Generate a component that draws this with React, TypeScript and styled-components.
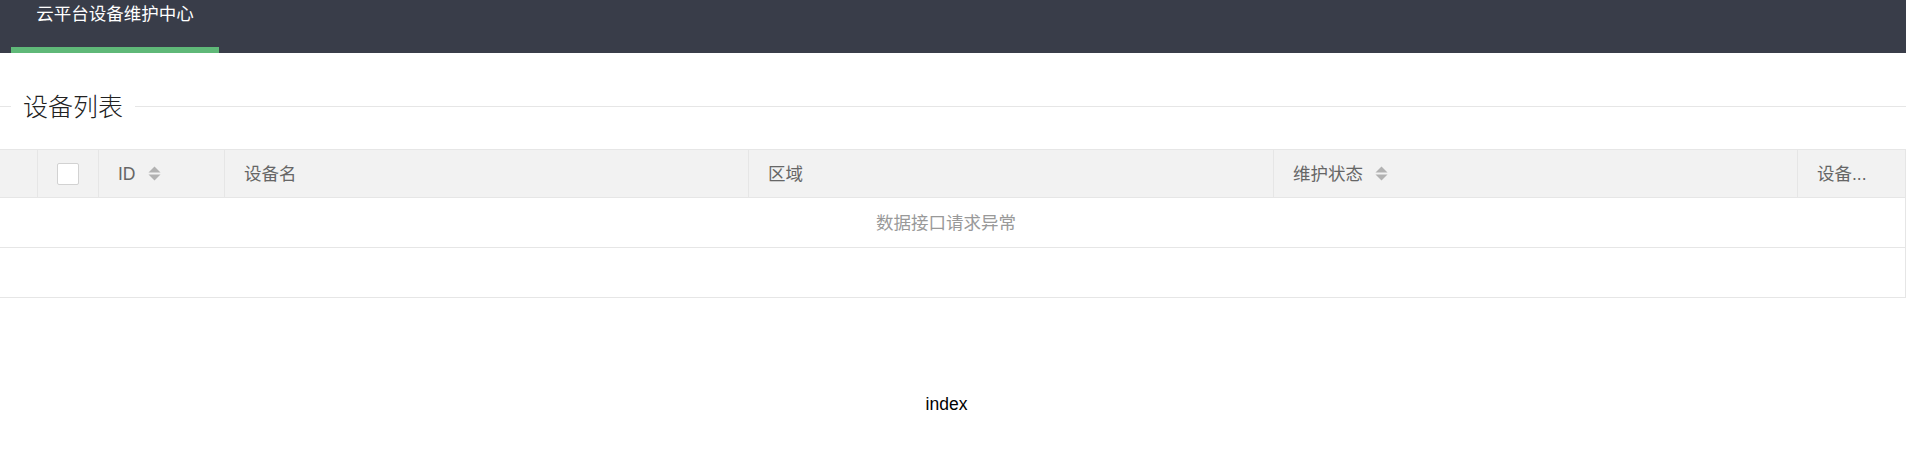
import React from "react";
import styled, { createGlobalStyle } from "styled-components";

const GlobalStyle = createGlobalStyle`
  html, body {
    margin: 0;
    padding: 0;
    background: #fff;
  }
  body {
    font-family: "Liberation Sans", "Noto Sans CJK SC", Arial, sans-serif;
    color: #333;
  }
  * { box-sizing: border-box; }
`;

const Header = styled.header`
  height: 53px;
  background: #393d49;
  padding-left: 11px;
  display: flex;
  align-items: stretch;
`;

const NavItem = styled.div`
  width: 208px;
  height: 53px;
  border-bottom: 6px solid #5fb878;
  color: #fff;
  font-size: 17.5px;
  line-height: 29px;
  text-align: center;
  white-space: nowrap;
`;

const TitleRow = styled.div`
  margin-top: 33px;
  height: 40px;
  display: flex;
  align-items: center;
  &::before,
  &::after {
    content: "";
    height: 1px;
    background: #e6e6e6;
  }
  &::before {
    width: 11px;
  }
  &::after {
    flex: 1;
  }
`;

const Legend = styled.span`
  padding: 0 12px;
  font-size: 25px;
  line-height: 40px;
  font-weight: 300;
  color: #222;
  position: relative;
  top: 1px;
`;

const Table = styled.div`
  margin-top: 23px;
  border-top: 1px solid #e6e6e6;
  font-size: 17.5px;
  color: #666;
`;

const HeadRow = styled.div`
  display: grid;
  grid-template-columns: 38px 61px 126px 524px 525px 524px 1fr;
  height: 48px;
  background: #f2f2f2;
  border-bottom: 1px solid #e6e6e6;
`;

const HeadCell = styled.div<{ $center?: boolean }>`
  border-right: 1px solid #e6e6e6;
  display: flex;
  align-items: center;
  justify-content: ${(p) => (p.$center ? "center" : "flex-start")};
  padding: ${(p) => (p.$center ? "0" : "0 19px")};
  white-space: nowrap;
  overflow: hidden;
  line-height: 24px;
`;

const CheckBox = styled.span`
  width: 22px;
  height: 22px;
  border: 1px solid #d2d2d2;
  border-radius: 2px;
  background: #fff;
  display: block;
`;

const SortIcon = styled.svg`
  margin-left: 12px;
  flex: none;
`;

const BodyRow = styled.div`
  height: 50px;
  border-bottom: 1px solid #e6e6e6;
  border-right: 1px solid #e6e6e6;
  display: flex;
  align-items: center;
  justify-content: center;
  padding-right: 13px;
  padding-top: 1px;
`;

const EmptyText = styled.span`
  color: #999;
  line-height: 24px;
`;

const Footer = styled.div`
  margin-top: 94px;
  text-align: center;
  padding-right: 13px;
  font-size: 17.5px;
  line-height: 24px;
  color: #000;
`;

const Sort = () => (
  <SortIcon width="13" height="15" viewBox="0 0 13 15">
    <polygon points="6.5,0.5 12.5,6.5 0.5,6.5" fill="#b2b2b2" />
    <polygon points="0.5,8.5 12.5,8.5 6.5,14.5" fill="#b2b2b2" />
  </SortIcon>
);

export default function App() {
  return (
    <>
      <GlobalStyle />
      <Header>
        <NavItem>云平台设备维护中心</NavItem>
      </Header>
      <TitleRow>
        <Legend>设备列表</Legend>
      </TitleRow>
      <Table>
        <HeadRow>
          <HeadCell $center />
          <HeadCell $center>
            <CheckBox />
          </HeadCell>
          <HeadCell>
            ID
            <Sort />
          </HeadCell>
          <HeadCell>设备名</HeadCell>
          <HeadCell>区域</HeadCell>
          <HeadCell>
            维护状态
            <Sort />
          </HeadCell>
          <HeadCell>设备...</HeadCell>
        </HeadRow>
        <BodyRow>
          <EmptyText>数据接口请求异常</EmptyText>
        </BodyRow>
        <BodyRow />
      </Table>
      <Footer>index</Footer>
    </>
  );
}
